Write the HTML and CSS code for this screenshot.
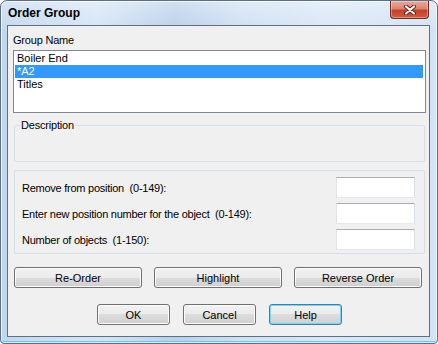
FILE: index.html
```html
<!DOCTYPE html>
<html lang="en">
<head>
  <meta charset="UTF-8" />
  <title>Order Group</title>
  <link rel="stylesheet" href="styles.css">
</head>
<body>

  <!-- Dialog window -->
  <div class="window">
    <div class="titlebar">
      <h1 class="title">Order Group</h1>
      <button class="close-btn" title="Close">
        <svg width="14" height="10" viewBox="0 0 14 10">
          <path d="M3 1.5 L11 8.5 M11 1.5 L3 8.5" stroke="#5a2019" stroke-width="4" stroke-linecap="round" />
          <path d="M3 1.5 L11 8.5 M11 1.5 L3 8.5" stroke="#ffffff" stroke-width="2.2" stroke-linecap="round" />
        </svg>
      </button>
    </div>

    <div class="client">
      <div class="field-label">Group Name</div>
      <ul class="list">
        <li>Boiler End</li>
        <li class="selected">*A2</li>
        <li>Titles</li>
      </ul>

      <fieldset class="desc-group">
        <legend>Description</legend>
      </fieldset>

      <div class="group">
        <div class="row">
          <label for="removePos">Remove from position&nbsp; (0-149):</label>
          <input type="text" id="removePos">
        </div>
        <div class="row">
          <label for="newPos">Enter new position number for the object&nbsp; (0-149):</label>
          <input type="text" id="newPos">
        </div>
        <div class="row">
          <label for="count">Number of objects&nbsp; (1-150):</label>
          <input type="text" id="count">
        </div>
      </div>

      <div class="actions">
        <button class="btn wide">Re-Order</button>
        <button class="btn wide">Highlight</button>
        <button class="btn wide">Reverse Order</button>
      </div>

      <div class="footer">
        <button class="btn">OK</button>
        <button class="btn">Cancel</button>
        <button class="btn default">Help</button>
      </div>
    </div>
  </div>

</body>
</html>
```

FILE: styles.css
```css
* { margin: 0; padding: 0; box-sizing: border-box; font-family: 'Liberation Sans', Arial, sans-serif; }

body {
  width: 438px;
  height: 344px;
  overflow: hidden;
  background: #ffffff;
  font-size: 11px;
  color: #000;
}

/* Aero style frame */
.window {
  width: 438px;
  height: 344px;
  border: 1px solid #5b6f85;
  border-radius: 7px 7px 4px 4px;
  padding: 0 7px 6px 6px;
  display: flex;
  flex-direction: column;
  background:
    linear-gradient(to bottom, rgba(255,255,255,0.35), rgba(255,255,255,0) 30px),
    linear-gradient(90deg, #c2d7ee 0%, #d6e5f5 22%, #b9d0ea 40%, #cfe0f2 55%, #d9e7f6 75%, #d3e3f4 100%);
  box-shadow: inset 0 0 0 1px rgba(255,255,255,0.7), inset 0 -2px 0 #5fcdef;
}

.titlebar {
  height: 24px;
  display: flex;
  align-items: center;
  justify-content: space-between;
}

.title {
  font-size: 12px;
  font-weight: bold;
  padding-left: 1px;
  color: #000;
  line-height: 24px;
}

.close-btn {
  align-self: flex-start;
  width: 39px;
  height: 18px;
  margin-right: 1px;
  border: 1px solid #6a2c24;
  border-top: none;
  border-radius: 0 0 4px 4px;
  background: linear-gradient(to bottom, #e9a99b 0%, #dc8471 45%, #c7412a 55%, #d45a3c 100%);
  box-shadow: inset 0 0 0 1px rgba(255,255,255,0.35);
  display: flex;
  align-items: center;
  justify-content: center;
}

.client {
  flex: 1;
  background: #f0f0f0;
  border: 1px solid #5f6e80;
  padding: 8px 3px 0 5px;
}

.field-label { line-height: 13px; margin-bottom: 3px; letter-spacing: -0.2px; }

.list {
  list-style: none;
  height: 63px;
  background: #fff;
  border: 1px solid #828790;
  padding: 1px 2px 1px 1px;
}
.list li { height: 13px; line-height: 13px; padding-left: 2px; }
.list li.selected { background: #3399ff; color: #fff; }

.desc-group {
  margin: 6px 1px 0 1px;
  height: 43px;
  border: 1px solid #d5dfe5;
  border-radius: 2px;
  padding: 0 5px;
}
.desc-group legend { padding: 0 1px; line-height: 13px; letter-spacing: -0.2px; }

.group {
  margin: 8px 1px 0 1px;
  border: 1px solid #d5dfe5;
  border-radius: 2px;
  padding: 6px 9px 3px 7px;
  display: flex;
  flex-direction: column;
  gap: 5px;
}
.row {
  display: flex;
  align-items: center;
  justify-content: space-between;
  height: 21px;
}
.row label { letter-spacing: -0.25px; }
.row input {
  width: 79px;
  height: 21px;
  border: 1px solid;
  border-color: #abadb3 #dbdfe6 #e3e9ef #e2e3ea;
  background: #fff;
  outline: none;
}

.btn {
  height: 21px;
  width: 73px;
  font-size: 11px;
  color: #000;
  border: 1px solid #707070;
  border-radius: 3px;
  background: linear-gradient(to bottom, #f2f2f2 0%, #ebebeb 50%, #dddddd 50%, #cfcfcf 100%);
  box-shadow: inset 0 0 0 1px #fcfcfc;
}
.btn.wide { width: 128px; }
.btn.default {
  border-color: #3c7fb1;
  box-shadow: inset 0 0 0 1px #74d6f6;
}

.actions {
  display: flex;
  gap: 12px;
  margin: 13px 0 0 1px;
}

.footer {
  display: flex;
  justify-content: center;
  gap: 13px;
  margin-top: 16px;
}
```
